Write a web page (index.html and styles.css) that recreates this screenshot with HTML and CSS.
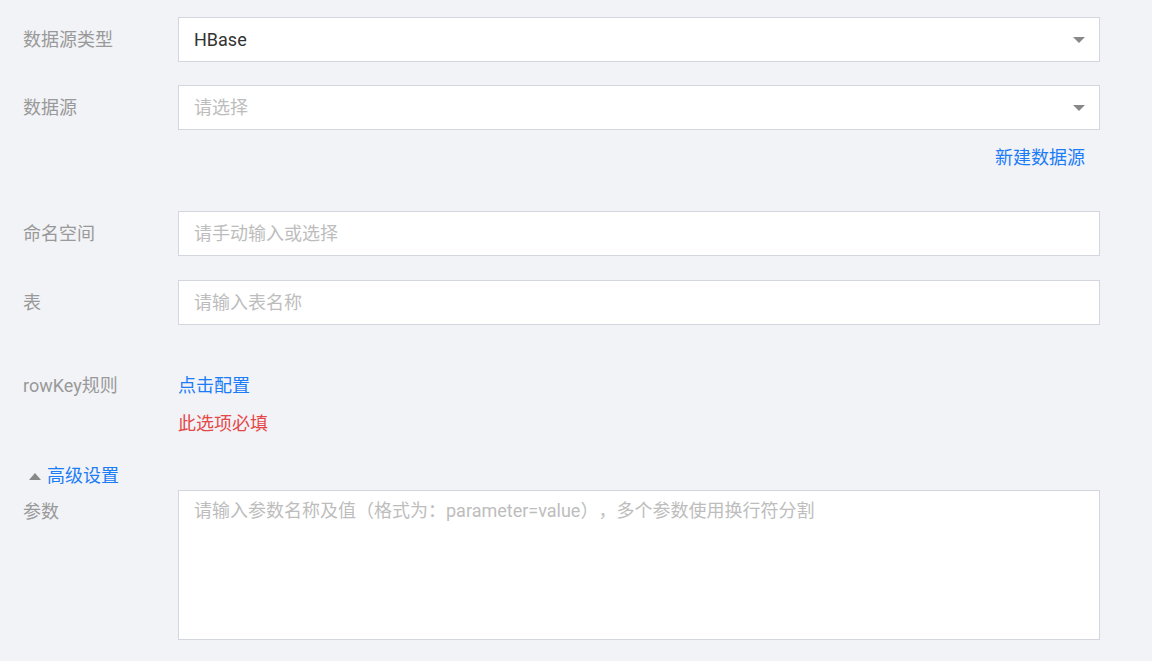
FILE: index.html
```html
<!DOCTYPE html>
<html lang="zh">
<head>
<meta charset="utf-8">
<link rel="stylesheet" href="styles.css">
</head>
<body>
<div class="form">
  <div class="item item-1">
    <div class="label">数据源类型</div>
    <div class="control">
      <div class="select"><span class="value">HBase</span><span class="arrow"></span></div>
    </div>
  </div>
  <div class="item item-2">
    <div class="label">数据源</div>
    <div class="control">
      <div class="select"><span class="placeholder">请选择</span><span class="arrow"></span></div>
    </div>
  </div>
  <div class="extra-link"><a class="link">新建数据源</a></div>
  <div class="item item-3">
    <div class="label">命名空间</div>
    <div class="control">
      <div class="input"><span class="placeholder">请手动输入或选择</span></div>
    </div>
  </div>
  <div class="item item-4">
    <div class="label">表</div>
    <div class="control">
      <div class="input"><span class="placeholder">请输入表名称</span></div>
    </div>
  </div>
  <div class="item item-text">
    <div class="label">rowKey规则</div>
    <div class="control">
      <a class="link">点击配置</a>
      <div class="error">此选项必填</div>
    </div>
  </div>
  <div class="advanced"><span class="up"></span><a class="link">高级设置</a></div>
  <div class="item item-area">
    <div class="label">参数</div>
    <div class="control">
      <div class="textarea"><span class="placeholder">请输入参数名称及值（格式为：parameter=value），多个参数使用换行符分割</span></div>
    </div>
  </div>
</div>
</body>
</html>
```

FILE: styles.css
```css
html, body {
  margin: 0;
  padding: 0;
  background: #f2f3f7;
}
body {
  font-family: Roboto, "Noto Sans CJK SC", sans-serif;
  font-size: 18px;
  color: #333;
  text-spacing-trim: space-all;
}
.form {
  width: 1100px;
  padding: 17px 0 0 23px;
  box-sizing: border-box;
}
.item {
  display: flex;
  align-items: center;
}
.label {
  width: 155px;
  flex: none;
  color: #999;
  line-height: 24px;
}
.control {
  flex: 1;
  min-width: 0;
}
.select, .input {
  height: 45px;
  box-sizing: border-box;
  background: #fff;
  border: 1px solid #d3d6de;
  display: flex;
  align-items: center;
  padding: 0 14px 0 15px;
}
.value {
  flex: 1;
  color: #333;
  line-height: 24px;
}
.placeholder {
  flex: 1;
  color: #bdbdbd;
  line-height: 24px;
}
.arrow {
  width: 0;
  height: 0;
  border-left: 6px solid transparent;
  border-right: 6px solid transparent;
  border-top: 6px solid #888;
  margin-top: 1px;
}
.item-2 { margin-top: 23px; }
.extra-link {
  margin-top: 16px;
  text-align: right;
  padding-right: 15px;
  line-height: 24px;
}
.link {
  color: #1a7cf6;
  cursor: pointer;
}
.item-3 { margin-top: 41px; }
.item-4 { margin-top: 24px; }
.item-text {
  margin-top: 49px;
  align-items: flex-start;
}
.item-text .control {
  line-height: 24px;
}
.error {
  color: #e54848;
  margin-top: 14px;
}
.advanced {
  margin-top: 28px;
  line-height: 24px;
  display: flex;
  align-items: center;
  padding-left: 6px;
}
.up {
  width: 0;
  height: 0;
  border-left: 6px solid transparent;
  border-right: 6px solid transparent;
  border-bottom: 7px solid #888;
  margin-right: 6px;
  margin-top: 1px;
}
.item-area {
  margin-top: 2px;
  align-items: flex-start;
}
.item-area .label {
  margin-top: 10px;
}
.textarea {
  height: 150px;
  box-sizing: border-box;
  background: #fff;
  border: 1px solid #d3d6de;
  padding: 8px 15px;
  line-height: 24px;
}
```
